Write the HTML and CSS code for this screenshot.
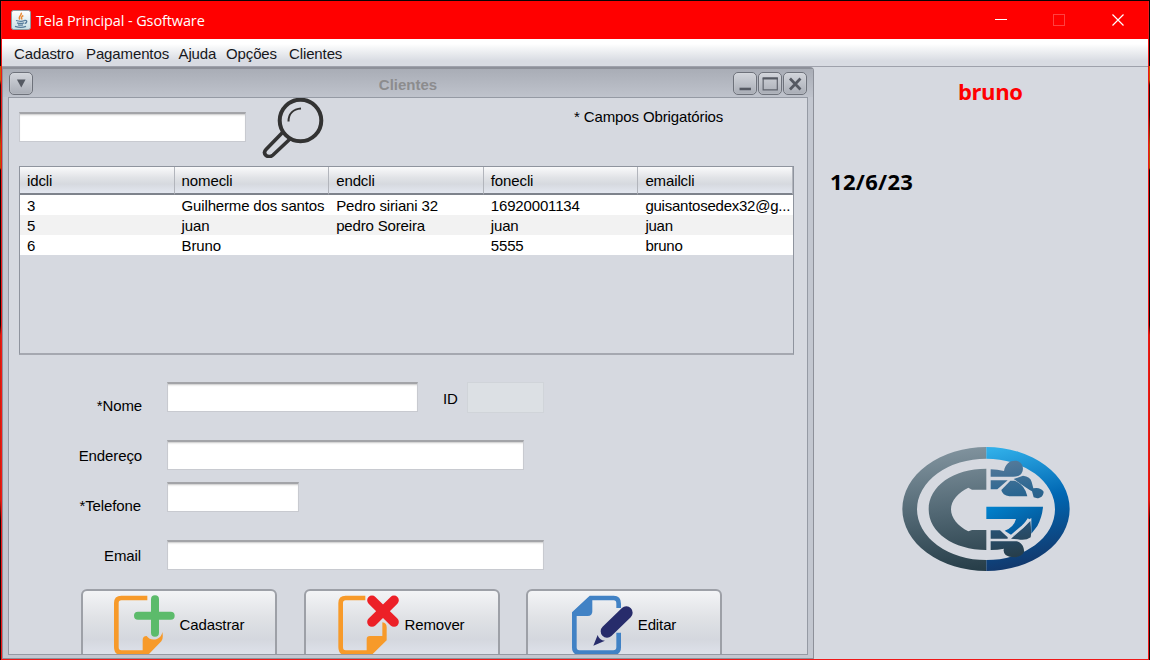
FILE: index.html
```html
<!DOCTYPE html>
<html lang="pt-BR">
<head>
<meta charset="utf-8">
<title>Tela Principal - Gsoftware</title>
<link rel="stylesheet" href="styles.css">
</head>
<body>
<div class="backdrop">
<div class="window">
  <header class="titlebar">
    <svg class="java-icon" viewBox="0 0 20 20">
      <defs><linearGradient id="tile" x2="0" y2="1"><stop stop-color="#fff"/><stop offset="1" stop-color="#c9dfe5"/></linearGradient></defs>
      <rect x=".5" y=".5" width="19" height="19" rx="2" fill="url(#tile)" stroke="#8f9ba0"/>
      <path d="M10 2.800c2 2-3.400 3.300-1.200 6.700M12.300 5.500c-2.600 1.500-2 2.200-1.300 4" fill="none" stroke="#e88a35" stroke-width="1.500"/>
      <path d="M5 10.500q5 1.600 8.500 0M6 12.800q3.500 1.200 7 0M7 14.800q2.500.8 5 0M4 16.300q6 2.200 11 0M13.500 10.500c3-.6 3 2.300.2 3" fill="none" stroke="#557b9b" stroke-width="1.300"/>
    </svg>
    <span class="window-title">Tela Principal - Gsoftware</span>
    <svg class="window-controls" viewBox="0 0 132 14" fill="none">
      <path d="M0 6.500h12" stroke="#fff"/>
      <rect x="58.500" y="1.500" width="11" height="11" stroke="#ff4040"/>
      <path d="M117.500 1.500l11 11M128.500 1.500l-11 11" stroke="#fff" stroke-width="1.200"/>
    </svg>
  </header>
  <nav class="menubar">
    <span class="menu-cadastro">Cadastro</span><span class="menu-pagamentos">Pagamentos</span><span class="menu-ajuda">Ajuda</span><span class="menu-opcoes">Opções</span><span>Clientes</span>
  </nav>
  <div class="workspace">
    <section class="frame">
      <header class="frame-bar">
        <button class="frame-btn"><svg viewBox="0 0 24 23"><path d="M7.500 7h9.500l-4.700 9z" fill="#555962"/></svg></button>
        <h1>Clientes</h1>
        <div class="frame-controls">
          <button class="frame-btn"><svg viewBox="0 0 24 23"><path d="M6 17.500h12.500" stroke="#555962" stroke-width="2.800"/></svg></button>
          <button class="frame-btn"><svg viewBox="0 0 24 23"><path d="M4.500 5.500h15.500v13H4.500z" fill="none" stroke="#5f636c" stroke-width="1.300"/><path d="M4 6h16.600" stroke="#555962" stroke-width="2.200"/></svg></button>
          <button class="frame-btn"><svg viewBox="0 0 24 23"><path d="M6.500 6l11.500 12M18 6l-11.500 12" stroke="#555962" stroke-width="3"/></svg></button>
        </div>
      </header>
      <div class="content">
        <div class="search-row">
          <input class="field search-field">
          <svg class="magnifier" viewBox="0 0 62 60" fill="none" stroke="#333">
            <circle cx="38.500" cy="22.500" r="20.800" stroke-width="4"/>
            <path d="M26.500 23.500c0-8 5-12.500 12.500-13" stroke-width="2"/>
            <path d="M20.500 34.500L4 51.500q-3 3 0 6q3.500 2.500 7-.5L28 41" stroke-width="3.600"/>
          </svg>
          <span class="required-note">* Campos Obrigatórios</span>
        </div>
        <div class="table-pane">
          <table>
            <thead><tr><th>idcli</th><th>nomecli</th><th>endcli</th><th>fonecli</th><th>emailcli</th></tr></thead>
            <tbody>
              <tr><td>3</td><td>Guilherme dos santos</td><td>Pedro siriani 32</td><td>16920001134</td><td>guisantosedex32@g...</td></tr>
              <tr><td>5</td><td>juan</td><td>pedro Soreira</td><td>juan</td><td>juan</td></tr>
              <tr><td>6</td><td>Bruno</td><td></td><td>5555</td><td>bruno</td></tr>
            </tbody>
          </table>
        </div>
        <form class="form">
          <div class="form-row row-nome"><label>*Nome</label><input class="field nome"><span class="id-label">ID</span><input class="field id-field" disabled></div>
          <div class="form-row row-endereco"><label>Endereço</label><input class="field endereco"></div>
          <div class="form-row row-telefone"><label>*Telefone</label><input class="field telefone"></div>
          <div class="form-row row-email"><label>Email</label><input class="field email"></div>
        </form>
        <div class="actions">
          <button class="action"><svg class="icon-add" viewBox="131 42 183 180">
            <path d="M231 51H153Q138 51 138 66V198Q138 215 153 215H224" fill="none" stroke="#f79a2a" stroke-width="14"/>
            <path d="M217 220V177Q217 165 229 165Q240 180 260 174Q274 168 276 153Q280 172 273 181L235 220Z" fill="#f79a2a"/>
            <path d="M254 55V155M203 104H301" stroke="#5cbb6b" stroke-width="24" stroke-linecap="round"/>
          </svg>Cadastrar</button>
          <button class="action"><svg class="icon-remove" viewBox="146 42 183 180">
            <path d="M228 51H169Q154 51 154 66V198Q154 215 169 215H238" fill="none" stroke="#f79a2a" stroke-width="14"/>
            <path d="M232 220V175Q232 165 242 165H279V124Q292 125 292 139V178L249 220Z" fill="#f79a2a"/>
            <path d="M248 58L314 123M314 58L248 123" stroke="#ec2027" stroke-width="29" stroke-linecap="round"/>
          </svg>Remover</button>
          <button class="action"><svg class="icon-edit" viewBox="188 42 183 180">
            <path d="M328 81V68Q328 51 313 51H244L195 97V199Q195 215 210 215H312Q328 215 328 199V155" fill="none" stroke="#4182c5" stroke-width="14"/>
            <path d="M249 50V91Q249 105 235 105H194V91L236 50Z" fill="#4182c5"/>
            <path d="M293 151L351 95" stroke="#272c6b" stroke-width="38" stroke-linecap="round"/>
            <path d="M252 194L265 162Q269 178 287 179Z" fill="#272c6b"/>
          </svg>Editar</button>
        </div>
      </div>
    </section>
    <aside class="side">
      <div class="user">bruno</div>
      <div class="date">12/6/23</div>
      <svg class="logo" viewBox="0 0 570 435">
        <defs>
          <linearGradient id="gray" gradientUnits="userSpaceOnUse" x1="180" y1="36" x2="220" y2="407"><stop stop-color="#82949f"/><stop offset=".5" stop-color="#536975"/><stop offset="1" stop-color="#273e49"/></linearGradient>
          <linearGradient id="blue" gradientUnits="userSpaceOnUse" x1="330" y1="40" x2="410" y2="390"><stop stop-color="#30aee8"/><stop offset=".48" stop-color="#0067b3"/><stop offset="1" stop-color="#12386c"/></linearGradient>
          <linearGradient id="bar" x2="1" y2="1"><stop stop-color="#0083cf"/><stop offset="1" stop-color="#064c8b"/></linearGradient>
          <linearGradient id="steel" gradientUnits="userSpaceOnUse" x1="340" y1="80" x2="390" y2="360"><stop stop-color="#547a9a"/><stop offset=".35" stop-color="#2b6691"/><stop offset=".65" stop-color="#285478"/><stop offset="1" stop-color="#273e4b"/></linearGradient>
        </defs>
        <path d="M289 36A252 186 0 0 0 289 408V375A208 152 0 0 1 289 71Z" fill="url(#gray)"/>
        <path d="M289 36A250 186 0 0 1 289 408V375A206 152 0 0 0 289 71Z" fill="url(#blue)"/>
        <path d="M289 101C190 101 116 153 116 223S190 345 289 345V285H246L235 289C203 273 183 249 183 223S204 173 235 158L246 164H289Z" fill="url(#gray)"/>
        <g fill="url(#steel)">
          <path d="M302 103Q322 103 342 108C346 84 363 75 382 78C399 83 404 103 393 118Q384 126 366 125H302Z"/>
          <path d="M302 136H353L322 163H302Z"/>
          <path d="M334 165L361 137H374Q406 151 412 184H358Q337 181 334 165Z"/>
          <path d="M371 132L399 122Q421 124 425 141L430 160Q450 155 461 170C460 188 444 193 431 187L426 169Q408 158 371 132Z"/>
          <path d="M302 286H330L358 311H302Z"/>
          <path d="M302 319H376C392 319 403 334 402 350C393 369 366 371 347 360Q338 349 342 341Q323 345 302 345Z"/>
          <path d="M363 311L400 279L421 258Q425 292 422 307Q407 318 383 313Z"/>
        </g>
        <path d="M289 215H459Q457 244 442 273L424 296V249Q416 252 408 265L370 304L344 287Q371 278 378 252H289Z" fill="url(#bar)"/>
        <path d="M354 312L398 274Q412 260 416 251" fill="none" stroke="#d6d9e0" stroke-width="7"/>
      </svg>
    </aside>
  </div>
</div>
</div>
</body>
</html>
```
FILE: styles.css
```css
* { box-sizing: border-box; }
body { margin: 0; overflow: hidden; font: 15px/18px "Liberation Sans", Arial, sans-serif; letter-spacing: -.12px; color: #000; }
button { font: inherit; color: inherit; letter-spacing: inherit; }
svg { display: block; flex: none; }

.backdrop {
  width: 1150px; height: 660px; padding: 1px 1px 0;
  background: linear-gradient(#080404 0 66px, #c95a00 66px 80px, #2a0905 85px 115px, #b55200 145px 168px, #120503 170px 325px, #d31d08 335px 500px, #160605 520px);
}
.window {
  display: flex; flex-direction: column; width: 1148px; height: 659px;
  border: 1px solid #f01818; border-top: 0; background: #d6d9e0;
}
.titlebar { display: flex; align-items: center; height: 38px; flex: none; padding: 0 21px 0 9px; background: #f00; }
.java-icon { width: 20px; height: 20px; }
.window-title { margin: 1px 0 0 5px; color: #fff; font: 14.5px/20px "Open Sans", "Noto Sans", sans-serif; letter-spacing: -.12px; white-space: nowrap; }
.window-controls { width: 132px; height: 14px; margin-left: auto; }

.menubar { display: flex; height: 28px; flex: none; padding: 6px 12px 0; border-bottom: 1px solid #9ea1ab; background: linear-gradient(#fff 0 5px, #f7f8f9 8px, #d8dbe2 22px); color: #17181c; }
.menu-cadastro { width: 72px; }
.menu-pagamentos { width: 92.500px; }
.menu-ajuda { width: 47.500px; }
.menu-opcoes { width: 63px; }

.workspace { display: flex; flex: 1; min-height: 0; }
.frame {
  display: flex; flex-direction: column; width: 812px; padding: 0 5px 3px;
  border: 1px solid #8d9099; border-top-width: 2px; border-radius: 0 4px 0 0; background: #c3c7d0;
}
.frame-bar { display: flex; align-items: center; justify-content: space-between; height: 28px; flex: none; margin: 0 -5px; padding: 0 6px; background: linear-gradient(#a9adb6, #bfc3cc); }
.frame-bar h1 { margin: 3px 0 0 50px; font-size: 15px; line-height: 18px; color: #8c8c8e; letter-spacing: 0; }
.frame-controls { display: flex; gap: 1px; }
.frame-btn { width: 24px; height: 23px; padding: 0; border: 1.500px solid #6e727b; border-radius: 5px; background: linear-gradient(#d2d5db, #a9adb6); box-shadow: inset 0 0 1px #eef0f3; }
.frame-btn svg { width: 22px; height: 21px; }

.content { flex: 1; min-height: 0; overflow: hidden; border: 1px solid #959aa4; padding: 0 13px 0 10px; background: #d6d9e0; }
.field { display: block; flex: none; height: 30px; margin: 0; padding: 4px; border: 1px solid #c8cad0; border-top: 2px solid #a3a4a8; background: #fff; box-shadow: inset 0 2px 2px -1px #c8c8c8; }
.search-row { display: flex; height: 68px; }
.search-field { width: 227px; margin-top: 14px; }
.magnifier { width: 62px; height: 60px; margin-left: 16px; }
.required-note { margin: 10px 0 0 250px; white-space: nowrap; }

.table-pane { height: 189px; width: 775px; border: 1px solid #8f949e; border-bottom: 2px solid #a5a8b0; }
table { width: 773px; table-layout: fixed; border-collapse: separate; border-spacing: 0; }
th, td { height: 20px; padding: 2px 0 0 7px; text-align: left; font-weight: normal; white-space: nowrap; line-height: 18px; }
td { letter-spacing: -.16px; }
td:last-child { letter-spacing: -.24px; }
th { height: 28px; padding-top: 1px; border-right: 1px solid #b2b5bc; border-bottom: 2px solid #7e838c; background: linear-gradient(#fafafb, #e0e2e6 11px, #d6d9df 17px, #e3e7f0); }
tbody tr { background: #fff; }
tbody tr:nth-child(2) { background: #f2f2f2; }

.form { padding-top: 27px; }
.form-row { display: flex; }
.form-row label { width: 123px; margin-right: 25px; text-align: right; }
.row-nome { height: 58px; }
.row-nome label { padding-top: 15px; }
.row-endereco { height: 42px; }
.row-endereco label { padding-top: 7px; }
.row-telefone { height: 58px; }
.row-telefone label { padding: 15px 1px 0 0; }
.row-email { height: 49px; }
.row-email label { padding: 7px 1px 0 0; }
.nome { width: 251px; }
.id-label { width: 49px; padding: 8px 0 0 25px; }
.id-field { width: 77px; height: 31px; border: 1px solid #d0d4d9; background: #dce0e4; box-shadow: none; }
.endereco { width: 357px; }
.telefone { width: 132px; }
.email { width: 377px; }

.actions { display: flex; gap: 26.500px; padding-left: 62px; }
.action { display: flex; align-items: center; justify-content: center; gap: 5px; width: 196px; height: 74px; padding: 0 0 2px; border: 2px solid #9da0a7; border-radius: 6px; background: linear-gradient(#f3f4f6, #dfe1e5 28px, #d4d7de 48px, #e1e5ee 68px); flex: none; }
.action svg { width: 61px; height: 60px; margin-top: -1px; }

.side { flex: 1; font-family: "Open Sans", "Noto Sans", sans-serif; font-weight: bold; font-size: 22px; line-height: 28px; }
.user { padding: 10px 0 0 144px; color: #f00; letter-spacing: -.4px; }
.date { padding: 62px 0 0 16px; letter-spacing: .3px; }
.logo { width: 190px; height: 145px; margin: 240px 0 0 76px; }
```
